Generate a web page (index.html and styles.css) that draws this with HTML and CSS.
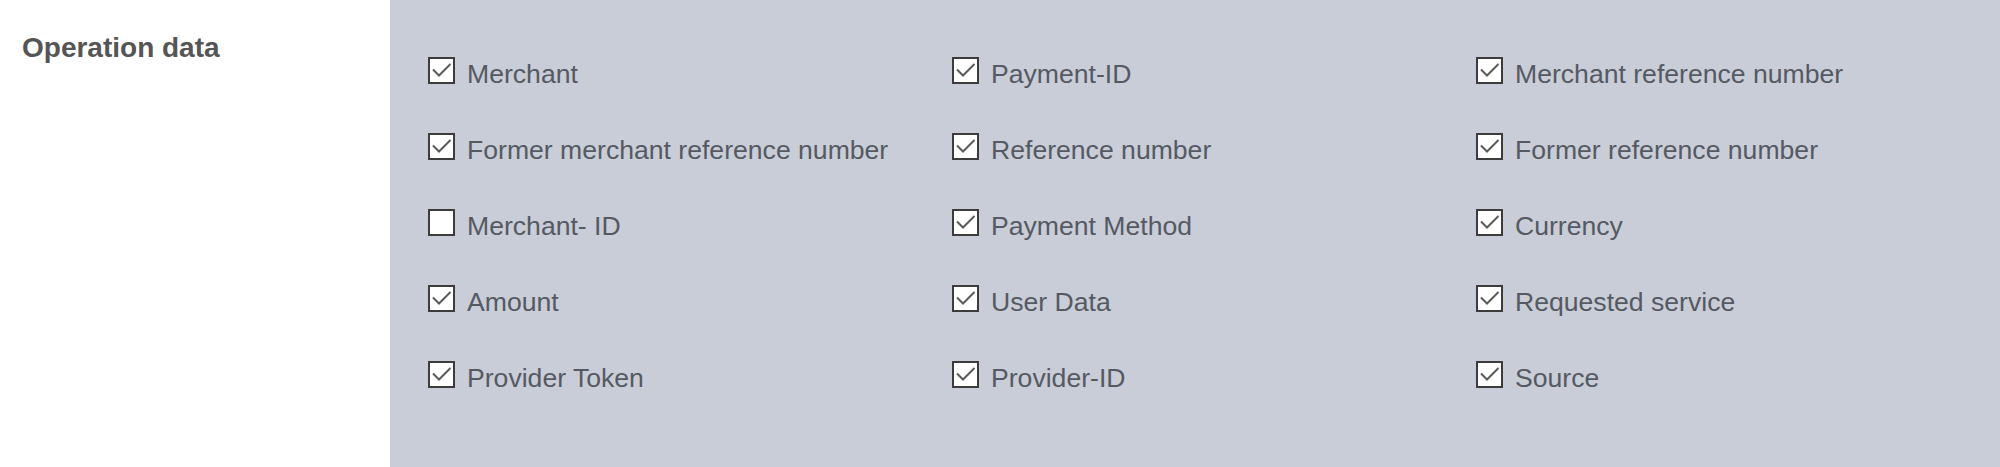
FILE: index.html
```html
<!DOCTYPE html>
<html lang="en">
<head>
    <meta charset="UTF-8">
    <title>Operation data</title>
    <link rel="stylesheet" href="styles.css">
</head>
<body>
    <div class="section">
        <div class="section-title">Operation data</div>
        <div class="panel">
            <div class="fields" id="fields"></div>
        </div>
    </div>

    <script>
        // field list, in reading order
        const fields = [
            ['Merchant', true], ['Payment-ID', true], ['Merchant reference number', true],
            ['Former merchant reference number', true], ['Reference number', true], ['Former reference number', true],
            ['Merchant- ID', false], ['Payment Method', true], ['Currency', true],
            ['Amount', true], ['User Data', true], ['Requested service', true],
            ['Provider Token', true], ['Provider-ID', true], ['Source', true]
        ];

        const tick = '<svg viewBox="0 0 27 27" width="27" height="27"><path d="M5 12.5 L11 18.5 L22.5 7" fill="none" stroke="#5a5a5a" stroke-width="2"/></svg>';

        const list = document.getElementById('fields');
        fields.forEach(([name, on]) => {
            const item = document.createElement('label');
            item.className = 'field';
            item.innerHTML = '<span class="box">' + (on ? tick : '') + '</span><span class="field-name">' + name + '</span>';
            list.appendChild(item);
        });
    </script>
</body>
</html>
```

FILE: styles.css
```css
body {
    margin: 0;
    font-family: "Liberation Sans", Arial, sans-serif;
    background: #fff;
}

.section {
    display: flex;
    height: 467px;
}

.section-title {
    width: 390px;
    box-sizing: border-box;
    padding: 32px 0 0 22px;
    font-size: 28px;
    font-weight: bold;
    color: #555;
}

.panel {
    flex: 1;
    background-color: #c9cdd8;
    padding: 57px 0 0 38px;
}

.fields {
    display: grid;
    grid-template-columns: repeat(3, 524px);
    row-gap: 49px;
}

.field {
    display: flex;
    align-items: flex-start;
    height: 27px;
    cursor: pointer;
}

.box {
    width: 27px;
    height: 27px;
    box-sizing: border-box;
    border: 2px solid #3c3c3c;
    background: #fff;
    flex-shrink: 0;
    position: relative;
}

.box svg {
    position: absolute;
    left: -2px;
    top: -2px;
}

.field-name {
    margin-left: 12px;
    margin-top: 4px;
    line-height: 27px;
    font-size: 26.6px;
    color: #555a62;
    white-space: nowrap;
}
```
